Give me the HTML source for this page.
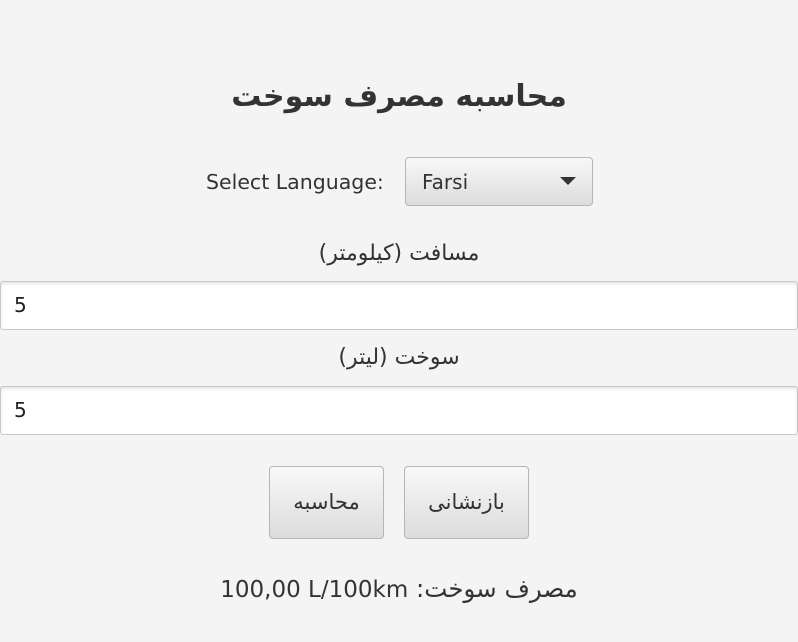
<!DOCTYPE html>
<html><head><meta charset="utf-8"><style>
body{margin:0;width:798px;height:642px;background:#f4f4f4;font-family:"DejaVu Sans",sans-serif;color:#333;position:relative;overflow:hidden}
.a{position:absolute;white-space:nowrap}
.c{left:0;width:798px;text-align:center}
.f{position:absolute;left:0;width:796px;height:47px;background:#fff;border:1px solid #c8c8c8;border-radius:3px;box-shadow:inset 0 2px 3px #e6e6e6;font-size:20px;line-height:47px;text-indent:13px;color:#222}
.b{position:absolute;border:1px solid #b5b5b5;border-radius:4px;background:linear-gradient(#f8f8f8,#dcdcdc);font-size:21px;text-align:center;color:#333}
</style></head><body>
<div class="a c" style="top:79px;font-size:30px;font-weight:bold;direction:rtl">محاسبه مصرف سوخت</div>
<div class="a" style="left:206px;top:170px;font-size:20.5px">Select Language:</div>
<div class="b" style="left:405px;top:157px;width:186px;height:47px;text-align:left">
<span style="position:absolute;left:16px;top:12px;font-size:20px">Farsi</span>
<span style="position:absolute;right:16px;top:19px;width:0;height:0;border-left:8px solid transparent;border-right:8px solid transparent;border-top:8px solid #333"></span></div>
<div class="a c" style="top:241px;font-size:22px;direction:rtl">مسافت (کیلومتر)</div>
<div class="f" style="top:281px">5</div>
<div class="a c" style="top:345px;font-size:22px;direction:rtl">سوخت (لیتر)</div>
<div class="f" style="top:386px">5</div>
<div class="b" style="left:269px;top:466px;width:113px;height:71px;line-height:71px">محاسبه</div>
<div class="b" style="left:404px;top:466px;width:123px;height:71px;line-height:71px">بازنشانی</div>
<div class="a c" style="top:574px;font-size:24.5px;direction:rtl">مصرف سوخت: <span dir="ltr" style="font-size:23px">100,00 L/100km</span></div>
</body></html>
